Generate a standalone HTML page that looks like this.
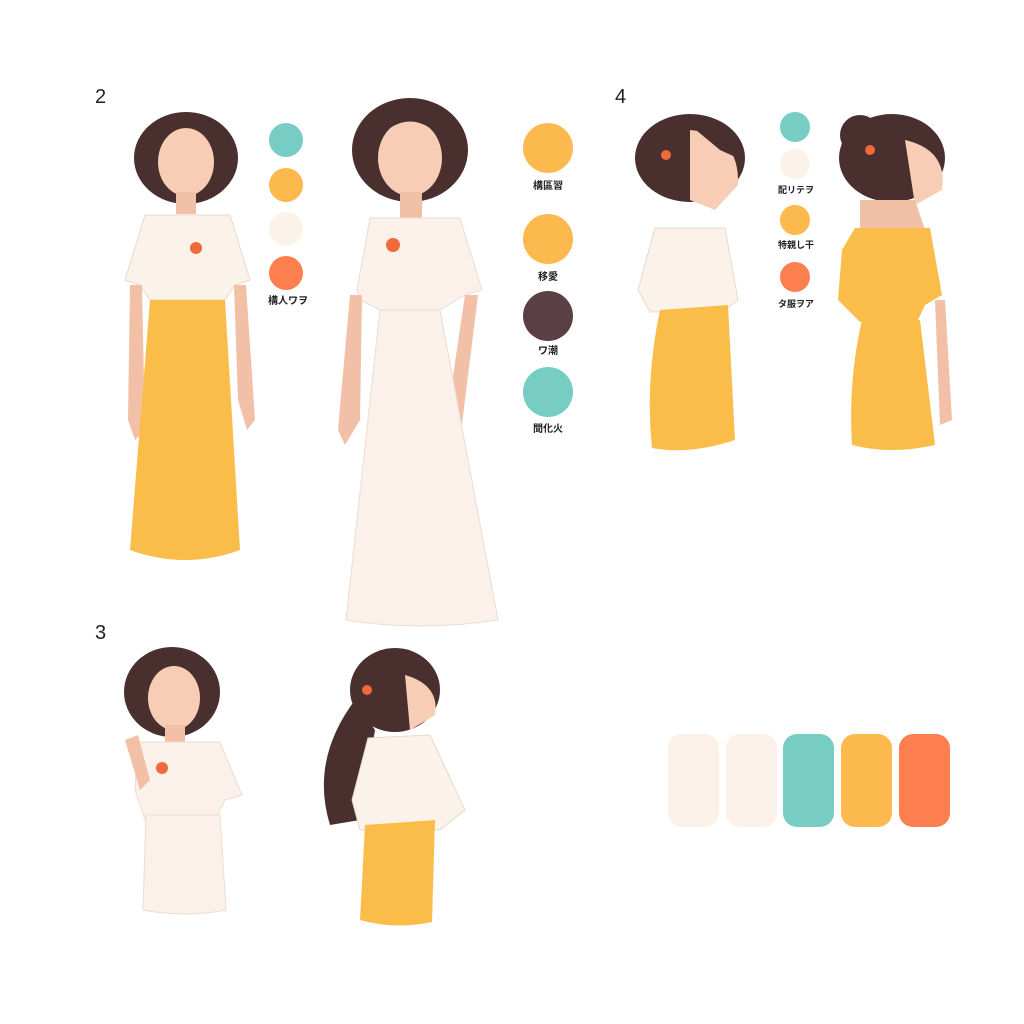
<!DOCTYPE html>
<html><head><meta charset="utf-8"><style>
html,body{margin:0;padding:0;background:#fff;}
svg{display:block}
text{font-family:"Liberation Sans","Noto Sans CJK JP",sans-serif;}
</style></head><body>
<svg width="1024" height="1024" viewBox="0 0 1024 1024" xmlns="http://www.w3.org/2000/svg">
<rect width="1024" height="1024" fill="#fff"/>
<g font-size="20" fill="#222">
<text x="95" y="103">2</text><text x="615" y="103">4</text><text x="95" y="639">3</text>
</g>

<!-- Figure A -->
<g>
<ellipse cx="186" cy="158" rx="52" ry="46" fill="#4a2f2f"/>
<ellipse cx="186" cy="162" rx="28" ry="34" fill="#f7cdb6"/>
<path d="M158 142 Q186 114 214 142 L214 130 Q186 108 158 130Z" fill="#4a2f2f"/>
<rect x="176" y="192" width="20" height="22" fill="#f2c0a6"/>
<path d="M145 215 L230 215 L250 280 L235 285 L225 300 L150 300 L140 285 L125 280Z" fill="#fbf3ea" stroke="#e8d8cc"/>
<path d="M130 285 L142 285 L145 430 L135 440 L128 420Z" fill="#f2c0a6"/>
<path d="M234 285 L246 285 L255 420 L247 430 L238 400Z" fill="#f2c0a6"/>
<path d="M150 300 L225 300 L240 550 Q185 570 130 550Z" fill="#fbbd4a"/>
<circle cx="196" cy="248" r="6" fill="#f06a3a"/>
</g>

<!-- Figure B -->
<g>
<ellipse cx="410" cy="150" rx="58" ry="52" fill="#4a2f2f"/>
<ellipse cx="410" cy="158" rx="32" ry="38" fill="#f7cdb6"/>
<path d="M378 138 Q410 105 442 138 L442 122 Q410 100 378 122Z" fill="#4a2f2f"/>
<rect x="400" y="192" width="22" height="26" fill="#f2c0a6"/>
<path d="M370 218 L460 218 L482 290 L465 295 L440 310 L380 310 L360 300 L357 290Z" fill="#fcf1ea" stroke="#eaddd2"/>
<path d="M350 295 L362 295 L360 420 L345 445 L338 430Z" fill="#f2c0a6"/>
<path d="M465 295 L478 295 L460 440 L450 445 L448 410Z" fill="#f2c0a6"/>
<path d="M380 310 L440 310 L498 620 Q420 632 346 620Z" fill="#fcf1ea" stroke="#eaddd2"/>
<circle cx="393" cy="245" r="7" fill="#f06a3a"/>
</g>

<!-- Figure C -->
<g>
<ellipse cx="690" cy="158" rx="55" ry="44" fill="#4a2f2f"/>
<path d="M690 130 Q740 135 738 185 L715 210 L690 200Z" fill="#f7cdb6"/>
<path d="M690 125 Q740 118 742 160 L720 150Z" fill="#4a2f2f"/>
<circle cx="666" cy="155" r="5" fill="#f06a3a"/>
<path d="M655 228 L725 228 L738 300 L725 310 L650 312 L638 290Z" fill="#fbf3ea" stroke="#e8d8cc"/>
<path d="M660 310 L728 305 L735 440 Q690 455 652 448 Q645 380 660 310Z" fill="#fbbd4a"/>
</g>

<!-- Figure D -->
<g>
<ellipse cx="892" cy="158" rx="53" ry="44" fill="#4a2f2f"/>
<circle cx="860" cy="135" r="20" fill="#4a2f2f"/>
<path d="M905 140 Q948 150 942 190 L915 205Z" fill="#f7cdb6"/>
<circle cx="870" cy="150" r="5" fill="#f06a3a"/>
<path d="M860 200 L915 200 L925 230 L860 232Z" fill="#f2c0a6"/>
<path d="M855 228 L930 228 L942 295 L925 305 L918 320 L860 322 L838 300 L842 250Z" fill="#fbbd4a"/>
<path d="M862 320 L920 320 L935 445 Q890 455 852 445 Q848 380 862 320Z" fill="#fbbd4a"/>
<path d="M935 300 L945 300 L952 420 L940 425Z" fill="#f2c0a6"/>
</g>

<!-- Figure E -->
<g>
<ellipse cx="172" cy="692" rx="48" ry="45" fill="#4a2f2f"/>
<ellipse cx="174" cy="698" rx="26" ry="32" fill="#f7cdb6"/>
<rect x="165" y="725" width="20" height="18" fill="#f2c0a6"/>
<path d="M138 742 L220 742 L242 795 L225 800 L215 820 L145 820 L135 790Z" fill="#fcf1ea" stroke="#eaddd2"/>
<path d="M125 740 L138 735 L150 780 L140 790Z" fill="#f2c0a6"/>
<path d="M146 815 L220 815 L226 910 Q185 918 143 910Z" fill="#fcf1ea" stroke="#eaddd2"/>
<circle cx="162" cy="768" r="6" fill="#f06a3a"/>
</g>

<!-- Figure F -->
<g>
<ellipse cx="395" cy="690" rx="45" ry="42" fill="#4a2f2f"/>
<path d="M355 700 Q310 760 330 825 L360 820 L375 730Z" fill="#4a2f2f"/>
<path d="M405 675 Q440 685 435 715 L410 730Z" fill="#f7cdb6"/>
<circle cx="367" cy="690" r="5" fill="#f06a3a"/>
<path d="M368 738 L430 735 L465 810 L440 830 L360 830 L352 800Z" fill="#fbf3ea" stroke="#e8d8cc"/>
<path d="M365 825 L435 820 L432 922 Q395 930 360 920Z" fill="#fbbd4a"/>
</g>

<g font-weight="bold" fill="#222">
<!-- swatch column 1 -->
<circle cx="286" cy="140" r="17" fill="#77cdc4"/>
<circle cx="286" cy="185" r="17" fill="#fbb94e"/>
<circle cx="286" cy="229" r="17" fill="#fbf3ea"/>
<circle cx="286" cy="273" r="17" fill="#fd7f4f"/>
<text x="288" y="304" font-size="10" text-anchor="middle">構人ワヲ</text>

<!-- swatch column 2 -->
<circle cx="548" cy="148" r="25" fill="#fbb94e"/>
<text x="548" y="189" font-size="10" text-anchor="middle">構區習</text>
<circle cx="548" cy="239" r="25" fill="#fbb94e"/>
<text x="548" y="280" font-size="10" text-anchor="middle">移愛</text>
<circle cx="548" cy="316" r="25" fill="#5a3f45"/>
<text x="548" y="354" font-size="10" text-anchor="middle">ワ潮</text>
<circle cx="548" cy="392" r="25" fill="#77cdc4"/>
<text x="548" y="432" font-size="10" text-anchor="middle">聞化火</text>

<!-- swatch column 3 -->
<circle cx="795" cy="127" r="15" fill="#77cdc4"/>
<circle cx="795" cy="164" r="15" fill="#fbf3ea"/>
<text x="796" y="193" font-size="9" text-anchor="middle">配リテヲ</text>
<circle cx="795" cy="220" r="15" fill="#fbb94e"/>
<text x="796" y="248" font-size="9" text-anchor="middle">特親し干</text>
<circle cx="795" cy="277" r="15" fill="#fd7f4f"/>
<text x="796" y="307" font-size="9" text-anchor="middle">タ服ヲア</text>
</g>

<!-- palette -->
<rect x="668" y="734" width="51" height="93" rx="14" fill="#fbf1e8"/>
<rect x="726" y="734" width="51" height="93" rx="14" fill="#fbf1e8"/>
<rect x="783" y="734" width="51" height="93" rx="14" fill="#77cdc4"/>
<rect x="841" y="734" width="51" height="93" rx="14" fill="#fbb94e"/>
<rect x="899" y="734" width="51" height="93" rx="14" fill="#fd7f4f"/>
</svg>
</body></html>
